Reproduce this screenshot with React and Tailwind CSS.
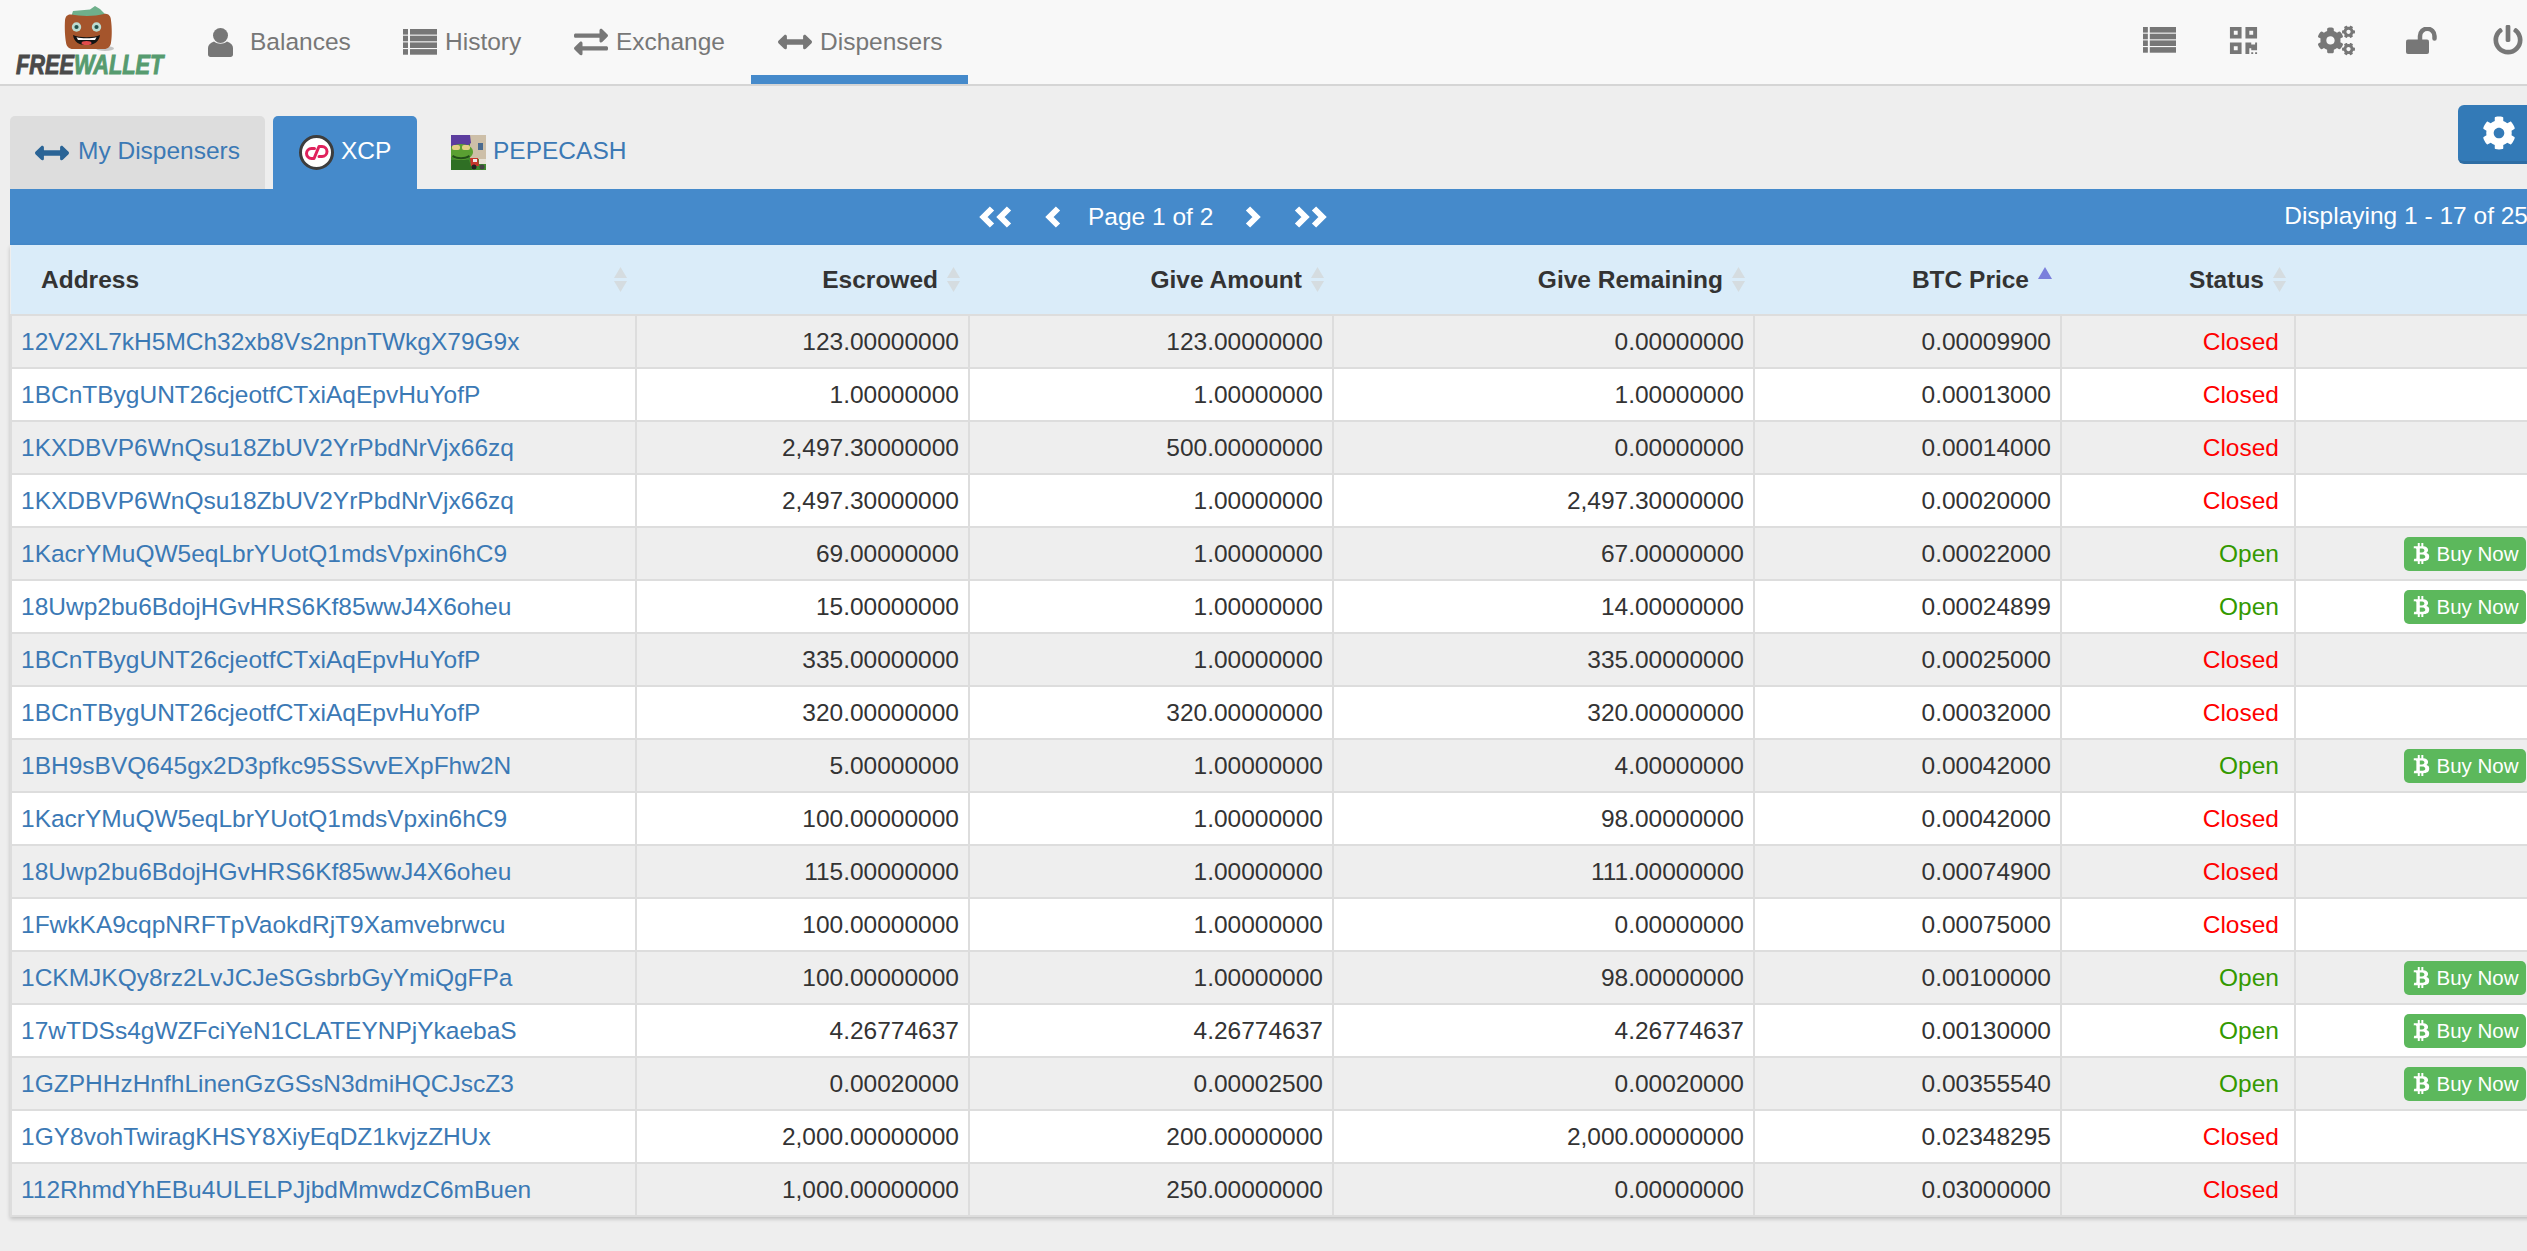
import React from "react";
import { FaExchangeAlt, FaArrowsAltH, FaQrcode, FaCogs, FaPowerOff, FaCog, FaBtc } from "react-icons/fa";

const rows = [
  ["12V2XL7kH5MCh32xb8Vs2npnTWkgX79G9x","123.00000000","123.00000000","0.00000000","0.00009900","Closed"],
  ["1BCnTBygUNT26cjeotfCTxiAqEpvHuYofP","1.00000000","1.00000000","1.00000000","0.00013000","Closed"],
  ["1KXDBVP6WnQsu18ZbUV2YrPbdNrVjx66zq","2,497.30000000","500.00000000","0.00000000","0.00014000","Closed"],
  ["1KXDBVP6WnQsu18ZbUV2YrPbdNrVjx66zq","2,497.30000000","1.00000000","2,497.30000000","0.00020000","Closed"],
  ["1KacrYMuQW5eqLbrYUotQ1mdsVpxin6hC9","69.00000000","1.00000000","67.00000000","0.00022000","Open"],
  ["18Uwp2bu6BdojHGvHRS6Kf85wwJ4X6oheu","15.00000000","1.00000000","14.00000000","0.00024899","Open"],
  ["1BCnTBygUNT26cjeotfCTxiAqEpvHuYofP","335.00000000","1.00000000","335.00000000","0.00025000","Closed"],
  ["1BCnTBygUNT26cjeotfCTxiAqEpvHuYofP","320.00000000","320.00000000","320.00000000","0.00032000","Closed"],
  ["1BH9sBVQ645gx2D3pfkc95SSvvEXpFhw2N","5.00000000","1.00000000","4.00000000","0.00042000","Open"],
  ["1KacrYMuQW5eqLbrYUotQ1mdsVpxin6hC9","100.00000000","1.00000000","98.00000000","0.00042000","Closed"],
  ["18Uwp2bu6BdojHGvHRS6Kf85wwJ4X6oheu","115.00000000","1.00000000","111.00000000","0.00074900","Closed"],
  ["1FwkKA9cqpNRFTpVaokdRjT9Xamvebrwcu","100.00000000","1.00000000","0.00000000","0.00075000","Closed"],
  ["1CKMJKQy8rz2LvJCJeSGsbrbGyYmiQgFPa","100.00000000","1.00000000","98.00000000","0.00100000","Open"],
  ["17wTDSs4gWZFciYeN1CLATEYNPjYkaebaS","4.26774637","4.26774637","4.26774637","0.00130000","Open"],
  ["1GZPHHzHnfhLinenGzGSsN3dmiHQCJscZ3","0.00020000","0.00002500","0.00020000","0.00355540","Open"],
  ["1GY8vohTwiragKHSY8XiyEqDZ1kvjzZHUx","2,000.00000000","200.00000000","2,000.00000000","0.02348295","Closed"],
  ["112RhmdYhEBu4ULELPJjbdMmwdzC6mBuen","1,000.00000000","250.00000000","0.00000000","0.03000000","Closed"],
];

function UserIcon() {
  return (
    <svg width="25" height="29" viewBox="0 0 25 29" fill="#777" className="shrink-0">
      <ellipse cx="12.5" cy="7.5" rx="7.5" ry="7.500" />
      <path d="M0 20c0-3 2-5 6-6.500 4 3 9 3 13 0 4 1.500 6 3.500 6 6.500v6.500c0 1.500-1 2.500-2.500 2.500h-20C1 29 0 28 0 26.500z" />
    </svg>
  );
}

function ListIcon({ width = 34 }) {
  const ys = [0, 6.7, 13.4, 20.1];
  return (
    <svg width={width} height="26" viewBox="0 0 34 26" fill="#777" className="shrink-0" preserveAspectRatio="none">
      {ys.map((y) => (
        <g key={y}>
          <rect x="0" y={y} width="5" height="5.600" />
          <rect x="7" y={y} width="27" height="5.600" />
        </g>
      ))}
    </svg>
  );
}

function UnlockIcon() {
  return (
    <svg width="31" height="27" viewBox="0 0 31 27" className="shrink-0 ml-[51px]">
      <rect x="0" y="12.500" width="23" height="14.500" rx="2" fill="#777" />
      <path d="M14 13V9a6.800 6.800 0 0 1 14.500 0v2.500" fill="none" stroke="#777" strokeWidth="4.500" strokeLinecap="round" />
    </svg>
  );
}

function Logo() {
  return (
    <div className="flex flex-col w-[150px] ml-[16px] mt-[6px] shrink-0">
      <svg width="54" height="46" viewBox="0 0 54 46" className="ml-[46px] shrink-0">
        <ellipse cx="43" cy="42.500" rx="9" ry="2.500" fill="#c4c4c4" />
        <path d="M9 11 L11 5 L28 3.500 L33 0 L38 3 L43 8 L44 12Z" fill="#6fb08b" />
        <path d="M3 15c0-5 3-7 6-6.500 10 2 24 2 33-.500 4-1 7 2 7 6.500 1 7 1 16 0 22-.500 4-3 6.500-7 6.500H11c-4 0-6.500-2.500-7-6.500-1-6-1.500-15-1-22z" fill="#a5552c" />
        <circle cx="14.500" cy="21" r="4.700" fill="#bcdcd0" />
        <circle cx="14.500" cy="21" r="2.100" fill="#23524a" />
        <circle cx="34.500" cy="21" r="4.700" fill="#bcdcd0" />
        <circle cx="34.500" cy="21" r="2.100" fill="#23524a" />
        <path d="M11 29c6 3 21 3 27 0-1 7-6 10-13.500 10S12 36 11 29z" fill="#141414" />
        <path d="M14.500 31.200c5 1.300 15 1.300 20 0l-1.500 2.800H16z" fill="#fff" />
        <ellipse cx="24.500" cy="37" rx="5" ry="2" fill="#e14b4b" />
      </svg>
      <div className="mt-[1px] h-[24px] leading-[24px] w-[150px] font-bold italic text-[27.5px] whitespace-nowrap origin-left scale-x-[0.79]">
        <span className="text-[#4a4a4a] [-webkit-text-stroke:1px_#4a4a4a]">FREE</span>
        <span className="text-[#569b6f] [-webkit-text-stroke:1px_#569b6f]">WALLET</span>
      </div>
    </div>
  );
}

function NavItem({ icon, label, active, w, gap = "gap-[8px]", pl = "pl-[27px]" }) {
  return (
    <div className={`flex items-center h-full ${gap} ${pl} ${w} ${active ? "border-b-[9px] border-[#458acb] pt-[9px]" : ""}`}>
      {icon}
      <span>{label}</span>
    </div>
  );
}

function SortBoth() {
  return (
    <svg width="13" height="25" viewBox="0 0 13 25" fill="#d5dce0" className="shrink-0">
      <path d="M6.500 0L13 11H0z" />
      <path d="M0 14h13L6.500 25z" />
    </svg>
  );
}

function Th({ children, sort = "both", pr = "pr-[10px]" }) {
  return (
    <th className={`font-bold p-0 ${pr}`}>
      <div className="flex items-center justify-end gap-[9px]">
        <span>{children}</span>
        {sort === "both" ? <SortBoth /> : (
          <svg width="14" height="25" viewBox="0 0 14 25" fill="#7a7fdc" className="shrink-0"><path d="M7 0l7 12H0z" /></svg>
        )}
      </div>
    </th>
  );
}

function XcpIcon() {
  return (
    <svg width="35" height="35" viewBox="0 0 35 35" className="shrink-0">
      <circle cx="17.500" cy="17.500" r="16" fill="#fff" stroke="#3d3d3d" strokeWidth="3" />
      <path d="M15.500 13.500h-3a5 5 0 0 0 0 10h2.500L20 11.500h3a5 5 0 0 1 0 10h-3" fill="none" stroke="#e0215c" strokeWidth="3" strokeLinecap="round" strokeLinejoin="round" />
    </svg>
  );
}

function PepeIcon() {
  return (
    <svg width="35" height="35" viewBox="0 0 35 35" className="shrink-0">
      <rect width="35" height="35" fill="#3f8a2e" />
      <rect x="19" y="0" width="16" height="24" fill="#cdbfa8" />
      <rect x="27" y="8" width="5" height="7" fill="#4a6a8f" />
      <path d="M0 0h19l1 8-4 3H0z" fill="#5c3d9e" />
      <ellipse cx="10" cy="17" rx="12" ry="8" fill="#5aa032" />
      <rect x="1" y="10" width="8" height="5" rx="2" fill="#e2cf85" />
      <rect x="11" y="10" width="8" height="5" rx="2" fill="#e2cf85" />
      <path d="M2 20c5 3 11 3 16 0l1 2c-6 3-12 3-18 0z" fill="#22501a" />
      <path d="M0 25h18l3 10H0z" fill="#2f6f24" />
      <path d="M19 23h8l1 8h-8z" fill="#c6362c" />
      <rect x="22" y="24" width="4" height="3" fill="#eee" />
      <circle cx="23" cy="32" r="2.500" fill="#222" />
      <circle cx="31" cy="32" r="2.500" fill="#444" />
      <rect x="28" y="24" width="7" height="5" fill="#e7e2d6" />
    </svg>
  );
}

function Chevron({ dir }) {
  const d = dir === "left" ? "M13 2.500 4.500 11l8.500 8.500" : "M3 2.500 11.500 11 3 19.500";
  return (
    <svg width="16" height="22" viewBox="0 0 16 22" className="shrink-0">
      <path d={d} fill="none" stroke="#fff" strokeWidth="6" strokeLinejoin="miter" />
    </svg>
  );
}

function DoubleChevron({ dir }) {
  return (
    <div className="flex gap-[1px] shrink-0">
      <Chevron dir={dir} />
      <Chevron dir={dir} />
    </div>
  );
}

export default function App() {
  return (
    <div className="w-[2527px] h-[1251px] overflow-hidden bg-[#eeeeee] text-[24.5px] leading-[34px] text-[#333] font-['Liberation_Sans',Arial,sans-serif]">
      <div className="flex items-stretch h-[86px] bg-[#f8f8f8] border-b-2 border-[#d5d5d5] text-[#777]">
        <Logo />
        <div className="flex items-stretch ml-[15px] h-[84px] mb-[-2px] box-content">
          <NavItem w="w-[195px]" gap="gap-[17px]" icon={<UserIcon />} label="Balances" />
          <NavItem w="w-[171px]" icon={<ListIcon />} label="History" />
          <NavItem w="w-[204px]" icon={<FaExchangeAlt size={34} className="shrink-0" />} label="Exchange" />
          <NavItem w="w-[217px]" active icon={<FaArrowsAltH size={34} className="shrink-0" />} label="Dispensers" />
        </div>
        <div className="flex items-center ml-auto pr-[4px] pb-[4px]">
          <ListIcon width={33} />
          <FaQrcode size={31} className="ml-[52px]" />
          <FaCogs size={37} className="ml-[59px]" />
          <UnlockIcon />
          <FaPowerOff size={30} className="ml-[56px]" />
        </div>
      </div>

      <div className="flex items-end h-[103px] pl-[10px] relative">
        <div className="flex items-center gap-[9px] h-[73px] w-[255px] pl-[25px] bg-[#dddddd] rounded-t-[5px]">
          <FaArrowsAltH size={34} className="text-[#2a6496] shrink-0" />
          <span className="text-[#3b79b5] mb-[3px]">My Dispensers</span>
        </div>
        <div className="flex items-center gap-[7px] h-[73px] w-[144px] ml-[8px] pl-[26px] bg-[#458acb] rounded-t-[5px] text-white">
          <XcpIcon />
          <span className="mb-[3px]">XCP</span>
        </div>
        <div className="flex items-center gap-[7px] h-[73px] ml-[34px] text-[#3b79b5]">
          <PepeIcon />
          <span className="mb-[3px]">PEPECASH</span>
        </div>
        <div className="absolute right-[-40px] top-[19px] w-[109px] h-[59px] flex items-center pl-[24px] text-white bg-[#337ab7] border-b-[3px] border-[#2e6da4] rounded-[6px]">
          <FaCog size={34} />
        </div>
      </div>

      <div className="w-[2525px] ml-[10px]">
        <div className="flex items-center h-[56px] bg-[#458acb] text-white pl-[969px]">
          <DoubleChevron dir="left" />
          <div className="ml-[33px]"><Chevron dir="left" /></div>
          <span className="ml-[27px]">Page 1 of 2</span>
          <div className="ml-[32px]"><Chevron dir="right" /></div>
          <div className="ml-[33px]"><DoubleChevron dir="right" /></div>
          <span className="ml-auto pr-[7px] mb-[2px]">Displaying 1 - 17 of 25</span>
        </div>
        <table className="table-fixed w-[2525px] border-collapse shadow-[0_2px_4px_rgba(0,0,0,0.2)]">
          <colgroup>
            <col className="w-[625px]" />
            <col className="w-[333px]" />
            <col className="w-[364px]" />
            <col className="w-[421px]" />
            <col className="w-[307px]" />
            <col className="w-[234px]" />
            <col className="w-[241px]" />
          </colgroup>
          <thead>
            <tr className="h-[70px] bg-[#daecf9] border-b-2 border-[#dddddd] text-[#333]">
              <th className="font-bold p-0 pl-[30px] pr-[9px]">
                <div className="flex items-center justify-between">
                  <span>Address</span>
                  <SortBoth />
                </div>
              </th>
              <Th pr="pr-[9px]">Escrowed</Th>
              <Th pr="pr-[9px]">Give Amount</Th>
              <Th pr="pr-[9px]">Give Remaining</Th>
              <Th sort="asc" pr="pr-[9px]">BTC Price</Th>
              <Th pr="pr-[9px]">Status</Th>
              <th className="p-0" />
            </tr>
          </thead>
          <tbody>
            {rows.map((r, i) => (
              <tr key={i} className={`h-[53px] border-b-2 border-[#dddddd] ${i % 2 === 0 ? "bg-[#eeeeee]" : "bg-white"}`}>
                <td className="p-0 pl-[9px] border-x-2 border-[#dddddd] text-[#3b79b5]">{r[0]}</td>
                <td className="p-0 pr-[9px] text-right border-r-2 border-[#dddddd]">{r[1]}</td>
                <td className="p-0 pr-[9px] text-right border-r-2 border-[#dddddd]">{r[2]}</td>
                <td className="p-0 pr-[9px] text-right border-r-2 border-[#dddddd]">{r[3]}</td>
                <td className="p-0 pr-[9px] text-right border-r-2 border-[#dddddd]">{r[4]}</td>
                <td className={`p-0 pr-[15px] text-right border-r-2 border-[#dddddd] ${r[5] === "Open" ? "text-[#339900]" : "text-[#ff0000]"}`}>{r[5]}</td>
                <td className="p-0 pr-[10px]">
                  {r[5] === "Open" && (
                    <div className="flex justify-end">
                      <div className="flex items-center justify-center gap-[4px] w-[122px] h-[34px] rounded-[5px] bg-[#5cb85c] text-white text-[20.5px]">
                        <FaBtc size={21} />
                        <span>Buy Now</span>
                      </div>
                    </div>
                  )}
                </td>
              </tr>
            ))}
          </tbody>
        </table>
      </div>
    </div>
  );
}
